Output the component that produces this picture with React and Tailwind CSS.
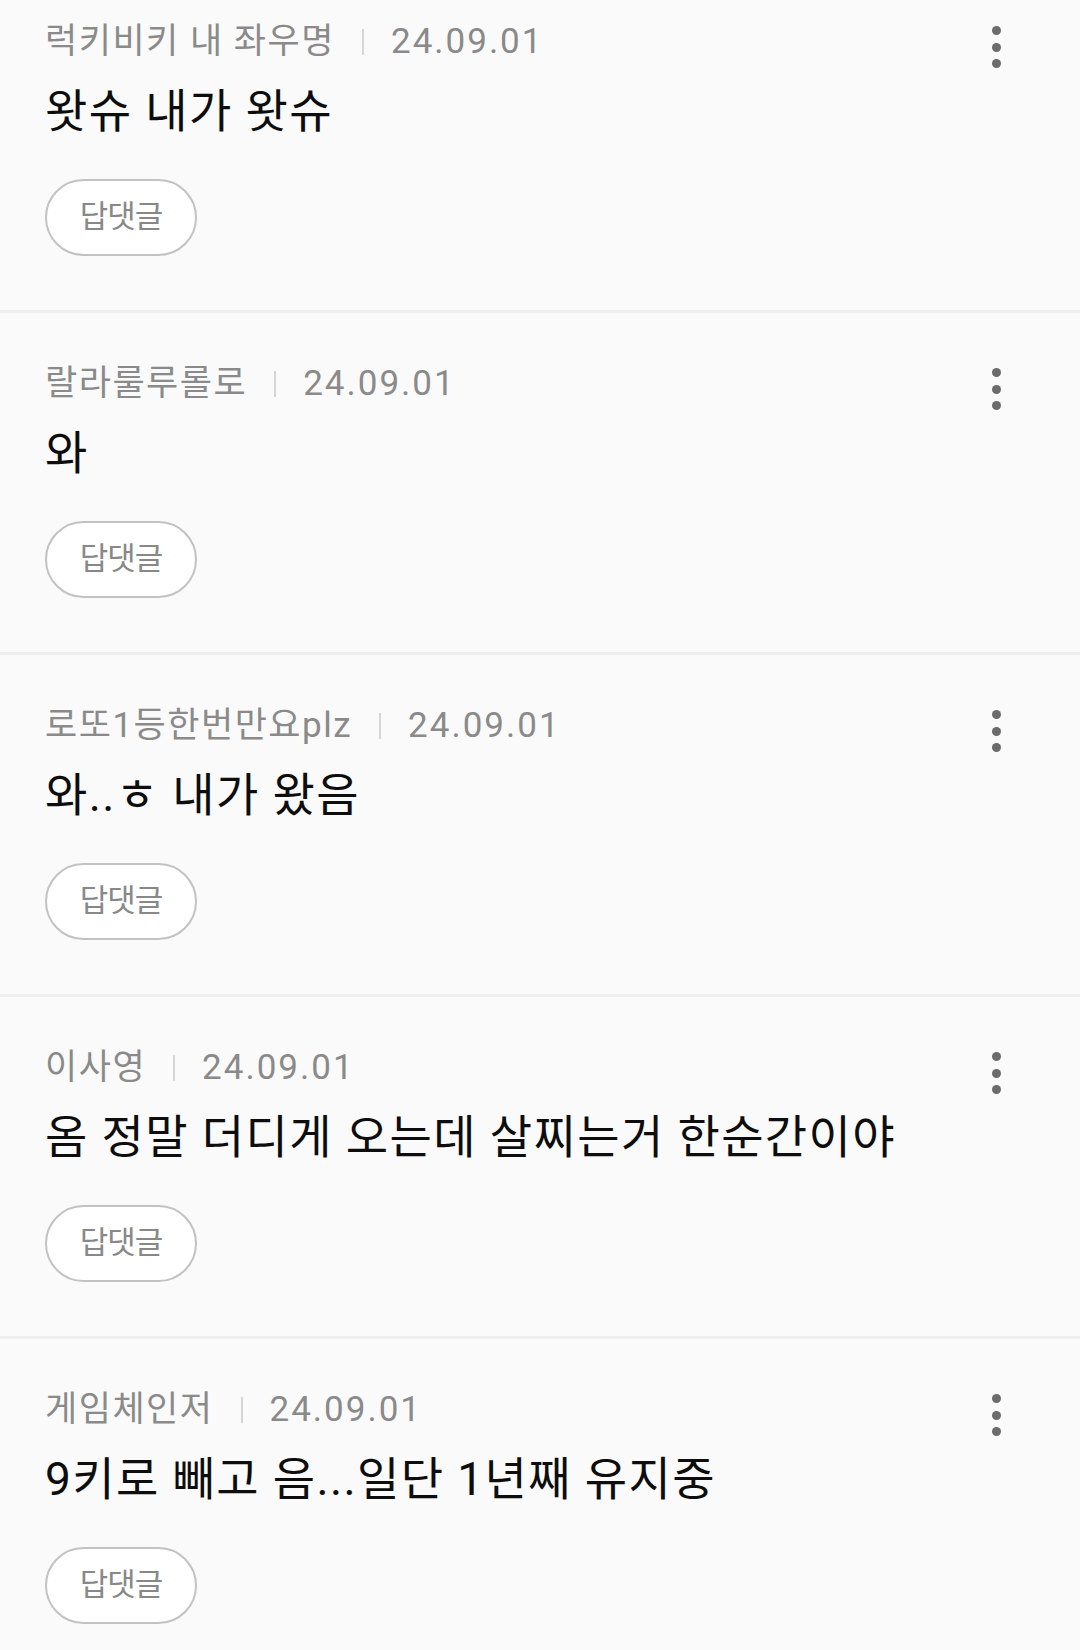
const comments = [
  { name: "럭키비키 내 좌우명", date: "24.09.01", text: "왓슈 내가 왓슈" },
  { name: "랄라룰루롤로", date: "24.09.01", text: "와" },
  { name: "로또1등한번만요plz", date: "24.09.01", text: "와..ㅎ 내가 왔음" },
  { name: "이사영", date: "24.09.01", text: "옴 정말 더디게 오는데 살찌는거 한순간이야" },
  { name: "게임체인저", date: "24.09.01", text: "9키로 빼고 음...일단 1년째 유지중" },
];

function Kebab() {
  return (
    <button className="flex h-[42px] w-[40px] flex-col items-center justify-center gap-[7.5px]" aria-label="더보기">
      <span className="block h-[9px] w-[9px] rounded-full bg-[#6b6b6b]" />
      <span className="block h-[9px] w-[9px] rounded-full bg-[#6b6b6b]" />
      <span className="block h-[9px] w-[9px] rounded-full bg-[#6b6b6b]" />
    </button>
  );
}

function CommentItem({ item, first }) {
  return (
    <div className="border-b-[3px] border-[#eeeeee]">
      <div className={`flex pl-[45px] pr-[64px] pb-[54px] ${first ? "pt-[22px]" : "pt-[51px]"}`}>
        <div className="flex-1">
          {/* meta row */}
          <div className="flex h-[40px] items-center text-[#8a8a8a]">
            <span className="text-[35px] leading-[40px] tracking-[1.5px]">{item.name}</span>
            <span className="mx-[27px] block h-[26px] w-[2px] shrink-0 bg-[#d6d6d6]" />
            <span className="text-[35px] leading-[40px] tracking-[2px]">{item.date}</span>
          </div>

          {/* body */}
          <p className="mt-[21px] text-[46px] leading-[56px] tracking-[1.4px] text-[#0d0d0d]">{item.text}</p>

          {/* reply */}
          <button className="mt-[40px] flex h-[77px] w-[152px] items-center justify-center rounded-full border-[2.5px] border-[#c2c2c2] bg-white text-[31px] tracking-[-1px] text-[#888888]">
            답댓글
          </button>
        </div>
        <div className="pt-[4px]">
          <Kebab />
        </div>
      </div>
    </div>
  );
}

export default function App() {
  return (
    <div
      className="h-[1650px] w-[1080px] overflow-hidden bg-[#fafafa]"
      style={{ fontFamily: 'Roboto, "Noto Sans CJK KR", sans-serif' }}
    >
      {comments.map((c, i) => (
        <CommentItem key={i} item={c} first={i === 0} />
      ))}
    </div>
  );
}
